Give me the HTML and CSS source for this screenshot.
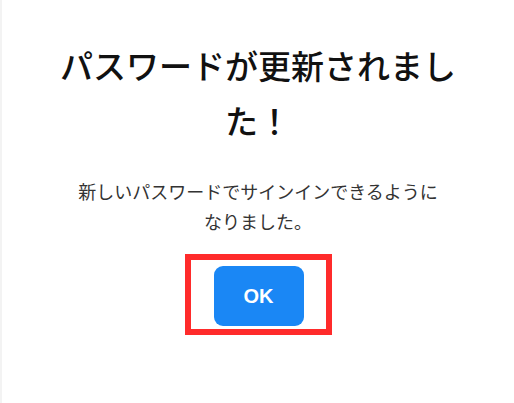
FILE: index.html
```html
<!DOCTYPE html>
<html lang="ja">
<head>
<meta charset="utf-8">
<link rel="stylesheet" href="styles.css">
</head>
<body>
<main class="page">
  <h1 class="title">パスワードが更新されました！</h1>
  <p class="message">新しいパスワードでサインインできるようになりました。</p>
  <div class="highlight">
    <button class="ok-button" type="button">OK</button>
  </div>
</main>
</body>
</html>
```

FILE: styles.css
```css
html, body {
  margin: 0;
  padding: 0;
  background: #ffffff;
}

body {
  font-family: "Noto Sans CJK JP", "Noto Sans", sans-serif;
}

.page {
  box-sizing: border-box;
  min-height: 403px;
  border-left: 2px solid #f3f3f3;
  display: flex;
  flex-direction: column;
  align-items: center;
  padding-top: 38px;
}

.title {
  margin: 0;
  max-width: 410px;
  font-size: 33px;
  line-height: 55px;
  font-weight: 500;
  color: #111111;
  text-align: center;
}

.message {
  margin: 28px 0 0;
  max-width: 370px;
  font-size: 18px;
  line-height: 30px;
  font-weight: 400;
  color: #333333;
  text-align: center;
}

.highlight {
  margin-top: 18px;
  border: 6px solid #ff2b2b;
  padding: 6px 22px 3px 23px;
  display: flex;
}

.ok-button {
  width: 90px;
  height: 60px;
  border: none;
  border-radius: 9px;
  background: #1a87f5;
  color: #ffffff;
  font-family: "Liberation Sans", Arial, sans-serif;
  font-weight: 700;
  font-size: 20px;
  padding: 0;
}
```
